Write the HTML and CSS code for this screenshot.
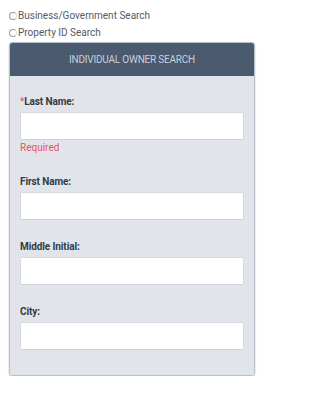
FILE: index.html
```html
<!DOCTYPE html>
<html>
<head>
<meta charset="utf-8">
<link rel="stylesheet" href="styles.css">
</head>
<body>
<div class="options">
  <label class="radio"><span class="dot"></span>Business/Government Search</label>
  <label class="radio"><span class="dot"></span>Property ID Search</label>
</div>
<div class="panel">
  <div class="panel-head">INDIVIDUAL OWNER SEARCH</div>
  <div class="panel-body">
    <div class="field">
      <div class="label"><span class="req">*</span>Last Name:</div>
      <div class="input"></div>
      <div class="error">Required</div>
    </div>
    <div class="field">
      <div class="label">First Name:</div>
      <div class="input"></div>
    </div>
    <div class="field">
      <div class="label">Middle Initial:</div>
      <div class="input"></div>
    </div>
    <div class="field">
      <div class="label">City:</div>
      <div class="input"></div>
    </div>
  </div>
</div>
</body>
</html>
```
FILE: styles.css
```css
html, body {
  margin: 0;
  padding: 0;
  background: #ffffff;
  font-family: Roboto, "Liberation Sans", sans-serif;
}
.options {
  padding: 7px 0 0 9px;
  display: flex;
  flex-direction: column;
}
.radio {
  display: flex;
  align-items: center;
  height: 17px;
  font-size: 10px;
  color: #555b63;
}
.dot {
  width: 6px;
  height: 6px;
  border: 1px solid #9a9a9a;
  border-right-color: #e0e0e0;
  border-radius: 50%;
  margin-right: 1px;
  box-sizing: content-box;
}
.panel {
  margin: 1px 0 0 9px;
  width: 246px;
  box-sizing: border-box;
  border: 1px solid #b9bfc7;
  border-radius: 3px;
  overflow: hidden;
  box-shadow: 0 1px 2px rgba(0,0,0,0.25);
}
.panel-head {
  height: 33px;
  background: #4a5a6f;
  color: #c9d0da;
  font-size: 10px;
  letter-spacing: -0.2px;
  display: flex;
  align-items: center;
  justify-content: center;
}
.panel-body {
  background: #e1e5eb;
  padding: 19px 10px 25px;
  display: flex;
  flex-direction: column;
  gap: 20px;
}
.field {
  display: flex;
  flex-direction: column;
}
.label {
  font-size: 10px;
  font-weight: bold;
  line-height: 14px;
  color: #333a44;
  margin-bottom: 3px;
  letter-spacing: -0.1px;
}
.req {
  color: #e0505c;
  font-weight: normal;
}
.input {
  height: 28px;
  box-sizing: border-box;
  background: #ffffff;
  border: 1px solid #d6dae0;
  border-bottom-color: #cdd1d7;
  border-radius: 2px;
}
.error {
  margin-top: 1px;
  font-size: 10px;
  line-height: 14px;
  color: #e8525e;
}
```
